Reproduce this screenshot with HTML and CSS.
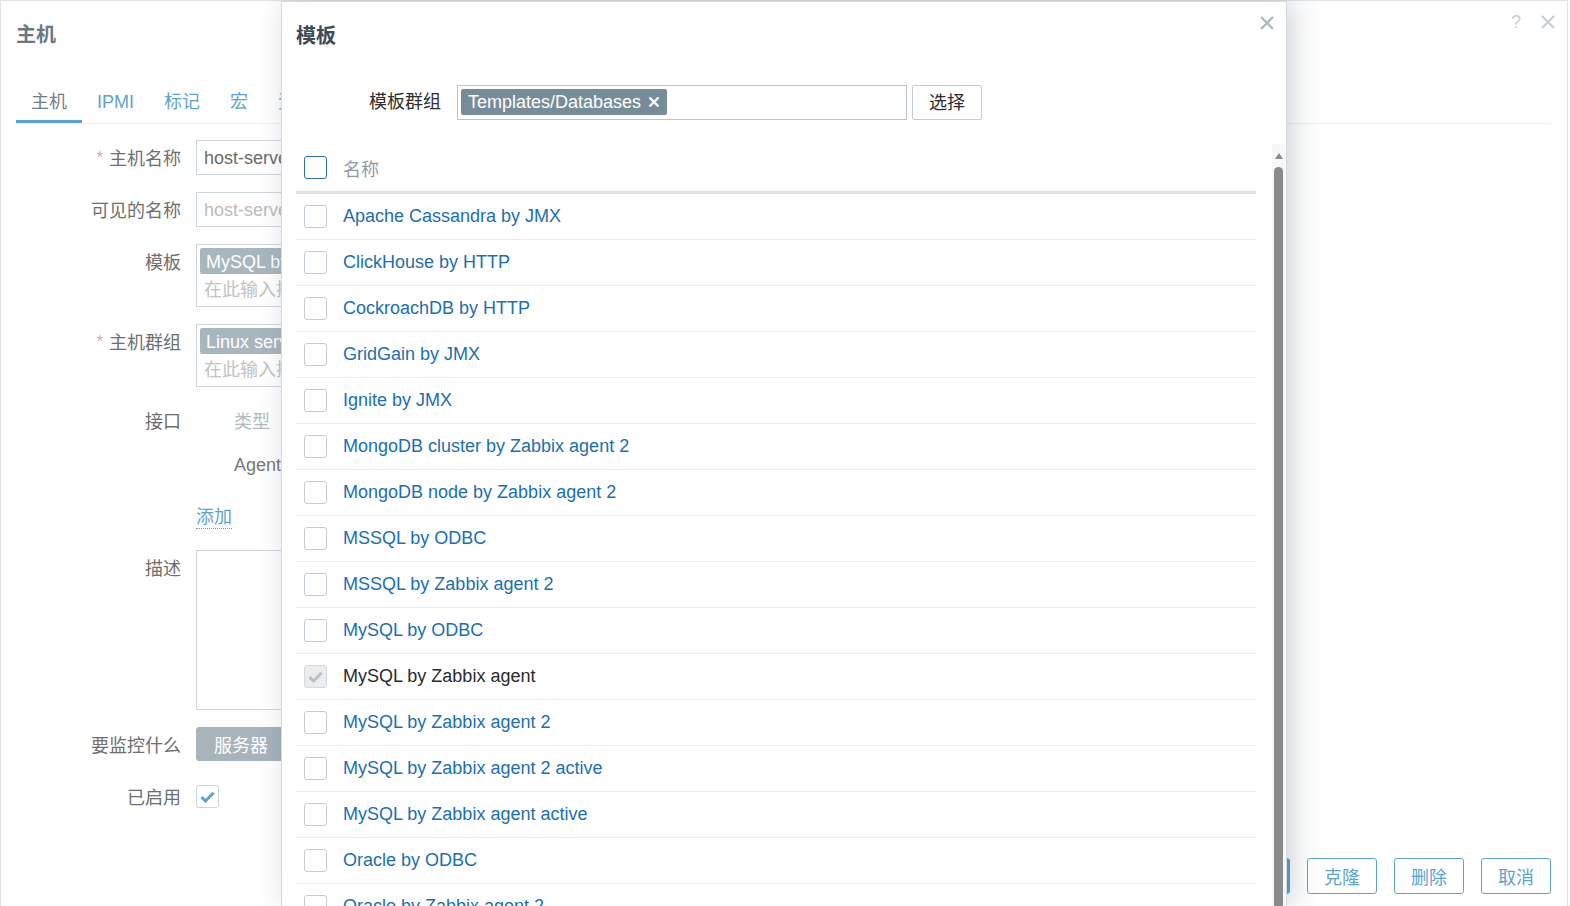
FILE: index.html
```html
<!DOCTYPE html>
<html lang="zh-CN">
<head>
<meta charset="utf-8">
<title>主机</title>
<link rel="stylesheet" href="styles.css">
</head>
<body>
<div class="host-dialog">
  <div class="dlg-head">
    <h2 class="dlg-title">主机</h2>
    <div class="dlg-tools">
      <span class="tool-help">?</span>
      <svg class="tool-close" width="14" height="14" viewBox="0 0 14 14"><path d="M1 1L13 13M13 1L1 13" stroke="#c5ced4" stroke-width="2.2" fill="none"/></svg>
    </div>
  </div>
  <ul class="tabs">
    <li class="tab active">主机</li>
    <li class="tab">IPMI</li>
    <li class="tab">标记</li>
    <li class="tab">宏</li>
    <li class="tab">资产记录</li>
    <li class="tab">加密</li>
    <li class="tab">值映射</li>
  </ul>
  <div class="host-form">
    <div class="f-label"><span class="req">*</span>主机名称</div>
    <div class="f-field"><div class="input">host-server01</div></div>

    <div class="f-label">可见的名称</div>
    <div class="f-field"><div class="input placeholder">host-server01</div></div>

    <div class="f-label">模板</div>
    <div class="f-field">
      <div class="multiselect">
        <span class="ms-tag">MySQL by Zabbix agent</span>
        <div class="ms-placeholder">在此输入搜索</div>
      </div>
    </div>

    <div class="f-label"><span class="req">*</span>主机群组</div>
    <div class="f-field">
      <div class="multiselect">
        <span class="ms-tag">Linux servers</span>
        <div class="ms-placeholder">在此输入搜索</div>
      </div>
    </div>

    <div class="f-label f-label-short">接口</div>
    <div class="f-field">
      <div class="iface">
        <div class="iface-head">类型</div>
        <div class="iface-row">Agent</div>
      </div>
    </div>

    <div class="f-label"></div>
    <div class="f-field f-line"><span class="link-add">添加</span></div>

    <div class="f-label">描述</div>
    <div class="f-field"><div class="textarea"></div></div>

    <div class="f-label">要监控什么</div>
    <div class="f-field"><div class="segmented"><span class="seg on">服务器</span><span class="seg">网络</span></div></div>

    <div class="f-label">已启用</div>
    <div class="f-field f-line">
      <span class="checkbox checked">
        <svg width="15" height="12" viewBox="0 0 15 12"><path d="M1.5 6.2L5.5 10L13.5 1.8" stroke="#5ea3d0" stroke-width="3" fill="none"/></svg>
      </span>
    </div>
  </div>
  <div class="dlg-foot">
    <button class="btn btn-primary">更新</button>
    <button class="btn">克隆</button>
    <button class="btn">删除</button>
    <button class="btn">取消</button>
  </div>
</div>

<div class="modal">
  <div class="m-head">
    <h3 class="m-title">模板</h3>
    <svg class="m-close" width="14" height="14" viewBox="0 0 14 14"><path d="M1 1L13 13M13 1L1 13" stroke="#aab7c0" stroke-width="2.2" fill="none"/></svg>
  </div>
  <div class="m-filter">
    <div class="m-label">模板群组</div>
    <div class="m-ms">
      <span class="m-tag"><span class="m-tag-text">Templates/Databases</span><svg class="m-tag-x" width="12" height="12" viewBox="0 0 12 12"><path d="M1.5 1.5L10.5 10.5M10.5 1.5L1.5 10.5" stroke="#ffffff" stroke-width="2.4" fill="none"/></svg></span>
    </div>
    <button class="m-btn">选择</button>
  </div>
  <div class="m-scroll">
    <div class="m-list">
      <div class="m-row m-hrow"><span class="cb cb-focus"></span><span class="m-hname">名称</span></div>
      <div class="m-row"><span class="cb"></span><span class="m-link">Apache Cassandra by JMX</span></div>
      <div class="m-row"><span class="cb"></span><span class="m-link">ClickHouse by HTTP</span></div>
      <div class="m-row"><span class="cb"></span><span class="m-link">CockroachDB by HTTP</span></div>
      <div class="m-row"><span class="cb"></span><span class="m-link">GridGain by JMX</span></div>
      <div class="m-row"><span class="cb"></span><span class="m-link">Ignite by JMX</span></div>
      <div class="m-row"><span class="cb"></span><span class="m-link">MongoDB cluster by Zabbix agent 2</span></div>
      <div class="m-row"><span class="cb"></span><span class="m-link">MongoDB node by Zabbix agent 2</span></div>
      <div class="m-row"><span class="cb"></span><span class="m-link">MSSQL by ODBC</span></div>
      <div class="m-row"><span class="cb"></span><span class="m-link">MSSQL by Zabbix agent 2</span></div>
      <div class="m-row"><span class="cb"></span><span class="m-link">MySQL by ODBC</span></div>
      <div class="m-row"><span class="cb cb-disabled"><svg width="15" height="12" viewBox="0 0 15 12"><path d="M1.5 6.2L5.5 10L13.5 1.8" stroke="#b9c1c6" stroke-width="3" fill="none"/></svg></span><span class="m-text">MySQL by Zabbix agent</span></div>
      <div class="m-row"><span class="cb"></span><span class="m-link">MySQL by Zabbix agent 2</span></div>
      <div class="m-row"><span class="cb"></span><span class="m-link">MySQL by Zabbix agent 2 active</span></div>
      <div class="m-row"><span class="cb"></span><span class="m-link">MySQL by Zabbix agent active</span></div>
      <div class="m-row"><span class="cb"></span><span class="m-link">Oracle by ODBC</span></div>
      <div class="m-row"><span class="cb"></span><span class="m-link">Oracle by Zabbix agent 2</span></div>
    </div>
    <div class="scrollbar">
      <span class="sb-arrow"></span>
      <span class="sb-thumb"></span>
    </div>
  </div>
</div>
</body>
</html>
```

FILE: styles.css
```css
html, body {
  margin: 0;
  padding: 0;
  width: 1570px;
  height: 906px;
  overflow: hidden;
  background: #ffffff;
}

body {
  font-family: "Liberation Sans", "Noto Sans CJK SC", sans-serif;
  font-size: 18px;
  color: #6e6e6e;
  position: relative;
}

/* ---------- background host dialog ---------- */
.host-dialog {
  width: 1568px;
  height: 906px;
  box-sizing: border-box;
  border: 1px solid #dde3e7;
  border-bottom: none;
  display: flex;
  flex-direction: column;
  background: #fff;
}

.dlg-head {
  height: 67px;
  flex: none;
  padding: 0 12px 0 15px;
  display: flex;
  align-items: center;
  justify-content: space-between;
}

.dlg-title {
  margin: 0;
  font-size: 20px;
  font-weight: bold;
  color: #6c7880;
  line-height: 24px;
}

.dlg-tools {
  display: flex;
  align-items: center;
  gap: 20px;
  margin-top: -26px;
}

.tool-help {
  color: #c8d0d5;
  font-size: 18px;
  line-height: 18px;
}

.tabs {
  list-style: none;
  flex: none;
  margin: 0 16px 0 15px;
  padding: 21px 0 0 0;
  display: flex;
  border-bottom: 1px solid #eef1f3;
}

.tab {
  padding: 0 15px 5px;
  line-height: 26px;
  color: #5ea3d0;
  border-bottom: 3px solid transparent;
  white-space: nowrap;
}

.tab.active {
  color: #727d84;
  border-bottom-color: #5ea3d0;
}

.host-form {
  display: grid;
  grid-template-columns: 180px 1fr;
  column-gap: 15px;
  row-gap: 17px;
  padding-top: 16px;
  align-items: start;
}

.f-label {
  height: 35px;
  box-sizing: border-box;
  text-align: right;
  padding-top: 4px;
  line-height: 31px;
  color: #6e6e6e;
  white-space: nowrap;
}

.f-label-short {
  height: 32px;
  padding-top: 5px;
  line-height: 27px;
}

.req {
  color: #f29a9a;
  margin-right: 6px;
  font-size: 16px;
  position: relative;
  top: -2px;
}

.f-line {
  height: 35px;
  display: flex;
  align-items: center;
}

.input {
  width: 680px;
  height: 35px;
  box-sizing: border-box;
  border: 1px solid #cdd6dc;
  padding: 2px 7px 0;
  line-height: 31px;
  color: #6b6b6b;
}

.input.placeholder {
  color: #bcbcbc;
}

.multiselect {
  width: 680px;
  height: 63px;
  box-sizing: border-box;
  border: 1px solid #cdd6dc;
  padding: 3px 3px 0;
}

.ms-tag {
  display: inline-block;
  height: 26px;
  line-height: 28px;
  padding: 0 6px;
  background: #a9b6be;
  color: #ffffff;
  border-radius: 2px;
}

.ms-placeholder {
  line-height: 30px;
  padding: 1px 0 0 4px;
  color: #c2c2c2;
}

.iface-head {
  height: 32px;
  box-sizing: border-box;
  padding: 4px 0 0 38px;
  line-height: 28px;
  color: #aebcc5;
}

.iface-row {
  margin-top: 10px;
  height: 35px;
  box-sizing: border-box;
  padding: 3px 0 0 38px;
  line-height: 32px;
  color: #777777;
}

.link-add {
  color: #5ea3d0;
  line-height: 22px;
  margin-top: 4px;
  border-bottom: 1px dotted #5ea3d0;
}

.textarea {
  width: 680px;
  height: 160px;
  box-sizing: border-box;
  border: 1px solid #cdd6dc;
}

.segmented {
  display: flex;
}

.seg {
  height: 34px;
  line-height: 34px;
  padding: 1px 17px 0;
  color: #6e6e6e;
  border: 1px solid #cdd6dc;
  box-sizing: border-box;
}

.seg.on {
  background: #a7b4bc;
  border-color: #a7b4bc;
  color: #ffffff;
  border-radius: 3px 0 0 3px;
}

.checkbox {
  width: 23px;
  height: 23px;
  box-sizing: border-box;
  border: 1px solid #cdd6dc;
  border-radius: 3px;
  display: flex;
  align-items: center;
  justify-content: center;
}

.dlg-foot {
  margin-top: auto;
  display: flex;
  justify-content: flex-end;
  gap: 17px;
  padding: 0 16px 12px;
}

.btn {
  width: 70px;
  height: 36px;
  box-sizing: border-box;
  border: 1px solid #5ea3d0;
  border-radius: 3px;
  background: #ffffff;
  color: #5ea3d0;
  font-family: inherit;
  font-size: 18px;
  padding: 0;
}

.btn-primary {
  background: #5ea3d0;
  color: #ffffff;
}

/* ---------- template picker modal ---------- */
.modal {
  position: absolute;
  left: 281px;
  top: 1px;
  width: 1006px;
  height: 905px;
  box-sizing: border-box;
  border: 1px solid #d3dbe0;
  border-bottom: none;
  background: #ffffff;
  box-shadow: 6px 0 26px rgba(40, 60, 80, 0.22);
  display: flex;
  flex-direction: column;
  overflow: hidden;
}

.m-head {
  height: 67px;
  flex: none;
  padding: 0 12px 0 14px;
  display: flex;
  align-items: center;
  justify-content: space-between;
}

.m-title {
  margin: 0;
  font-size: 20px;
  font-weight: bold;
  color: #3d4c56;
  line-height: 24px;
}

.m-close {
  margin-top: -26px;
}

.m-filter {
  flex: none;
  margin-top: 15px;
  padding-left: 14px;
  display: flex;
  align-items: center;
}

.m-label {
  width: 145px;
  margin-right: 16px;
  text-align: right;
  color: #2e2e2e;
  line-height: 35px;
  padding-top: 1px;
  white-space: nowrap;
}

.m-ms {
  width: 450px;
  height: 35px;
  box-sizing: border-box;
  border: 1px solid #b9c5cc;
  padding: 3px;
}

.m-tag {
  display: inline-flex;
  align-items: center;
  gap: 7px;
  height: 26px;
  padding: 0 7px;
  background: #768d99;
  color: #ffffff;
  border-radius: 2px;
}

.m-tag-text {
  line-height: 26px;
}

.m-btn {
  margin-left: 5px;
  width: 70px;
  height: 35px;
  box-sizing: border-box;
  border: 1px solid #c3cdd3;
  border-radius: 2px;
  background: #ffffff;
  color: #2e2e2e;
  font-family: inherit;
  font-size: 18px;
  padding: 0 0 3px;
}

.m-scroll {
  flex: 1;
  min-height: 0;
  margin-top: 24px;
  padding-left: 14px;
  display: flex;
  overflow: hidden;
}

.m-list {
  width: 960px;
  flex: none;
  margin-right: 16px;
}

.m-row {
  height: 45px;
  display: flex;
  align-items: center;
  padding-left: 8px;
  border-bottom: 1px solid #ebeef0;
}

.m-hrow {
  height: 47px;
  border-bottom: 3px solid #dde2e5;
}

.cb {
  width: 23px;
  height: 23px;
  flex: none;
  box-sizing: border-box;
  border: 1px solid #c3ccd2;
  border-radius: 3px;
  margin-right: 16px;
  display: flex;
  align-items: center;
  justify-content: center;
}

.cb-focus {
  border-color: #2f6fa6;
}

.cb-disabled {
  background: #ebedee;
  border-color: #d2d8dc;
}

.m-hname {
  color: #8c9ba4;
}

.m-link {
  color: #1b6fb3;
}

.m-text {
  color: #2b2b2b;
}

.scrollbar {
  width: 13px;
  flex: none;
  background: #f7f7f7;
  display: flex;
  flex-direction: column;
  align-items: center;
  padding-top: 9px;
}

.sb-arrow {
  width: 0;
  height: 0;
  border-left: 4px solid transparent;
  border-right: 4px solid transparent;
  border-bottom: 6px solid #8a8a8a;
}

.sb-thumb {
  margin-top: 8px;
  width: 9px;
  flex: 1;
  background: #8a8a8a;
  border-radius: 5px 5px 0 0;
}
```
